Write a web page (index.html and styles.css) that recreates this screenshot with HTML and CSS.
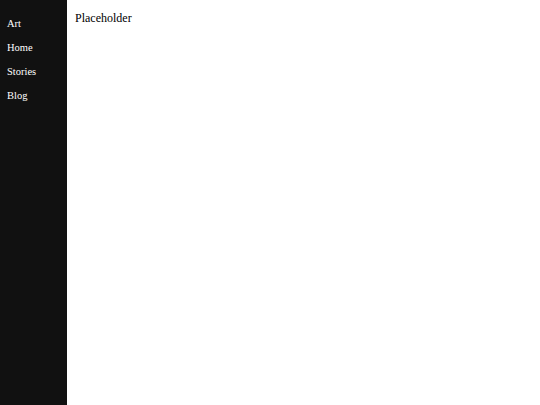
FILE: index.html
```html
<!DOCTYPE html>
<html>
<head>
<meta charset="utf-8">
<link rel="stylesheet" href="styles.css">
</head>
<body>
<div class="layout">
  <nav class="sidebar">
    <a class="nav-link" href="#">Art</a>
    <a class="nav-link" href="#">Home</a>
    <a class="nav-link" href="#">Stories</a>
    <a class="nav-link" href="#">Blog</a>
  </nav>
  <main class="content">
    <p class="placeholder">Placeholder</p>
  </main>
</div>
</body>
</html>
```
FILE: styles.css
```css
html, body {
  margin: 0;
  padding: 0;
  height: 100%;
}
body {
  font-family: "Liberation Serif", "Times New Roman", serif;
  font-size: 12px;
  background: #ffffff;
  color: #000;
}
.layout {
  display: flex;
  height: 100%;
}
.sidebar {
  width: 67px;
  flex: none;
  background: #111111;
  display: flex;
  flex-direction: column;
  padding-top: 12px;
  box-sizing: border-box;
}
.nav-link {
  display: block;
  color: #ffffff;
  text-decoration: none;
  padding: 4px 7px;
  font-size: 10.5px;
  line-height: 16px;
}
.content {
  flex: 1;
  padding: 0 8px;
}
.placeholder {
  margin: 10px 0 0;
  line-height: 16px;
}
```
